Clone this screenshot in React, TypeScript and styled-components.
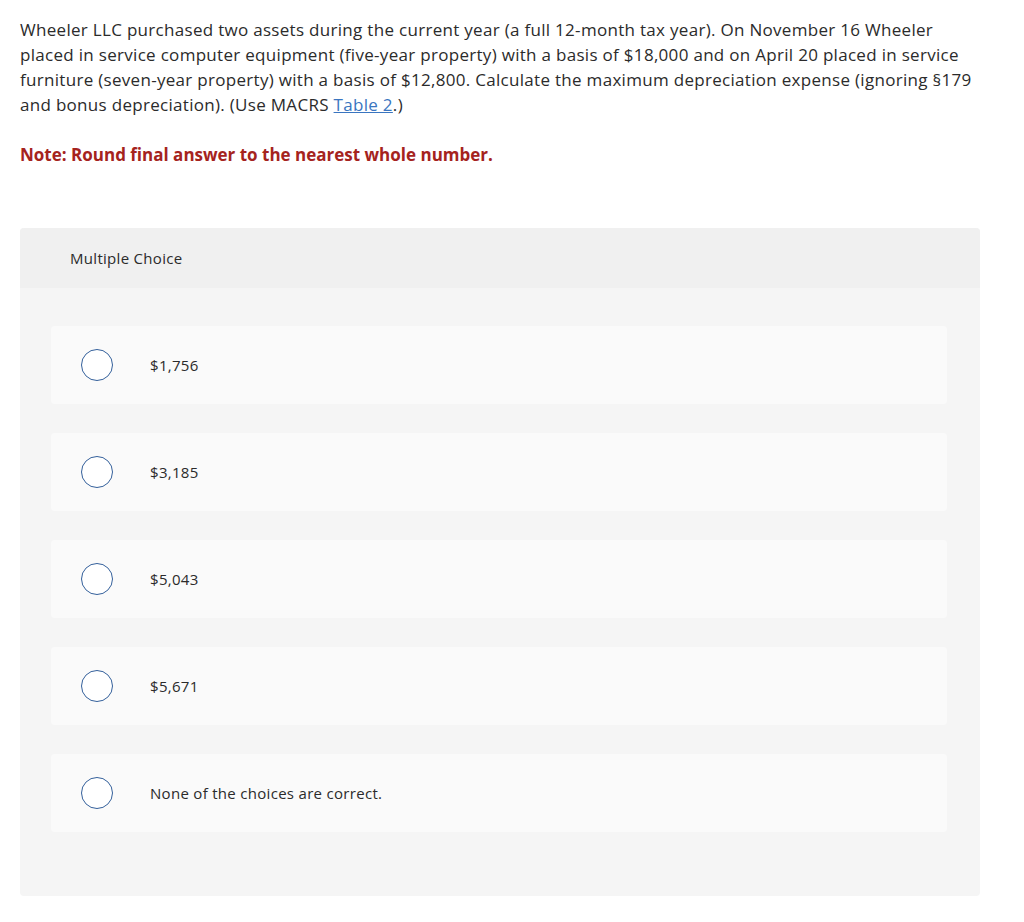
import styled, { createGlobalStyle } from 'styled-components';

const GlobalStyle = createGlobalStyle`
  body {
    margin: 0;
    background: #fff;
    font-family: "Open Sans", "Lato", sans-serif;
    color: #2b2b2b;
  }
`;

const Page = styled.div`
  padding: 17px 20px 0 20px;
`;

const Question = styled.p`
  margin: 0;
  font-size: 17px;
  line-height: 25px;
  letter-spacing: 0.3px;
  color: #2b2b2b;
  white-space: nowrap;
`;

const TableLink = styled.a`
  color: #3a75c0;
  text-decoration: underline;
`;

const Note = styled.p`
  margin: 25px 0 0;
  font-size: 17px;
  line-height: 25px;
  font-weight: 700;
  color: #a5231d;
`;

const Panel = styled.div`
  margin-top: 61px;
  width: 960px;
  background: #f5f5f5;
  border-radius: 4px;
  overflow: hidden;
`;

const PanelHeader = styled.div`
  height: 60px;
  display: flex;
  align-items: center;
  padding-left: 50px;
  background: #f0f0f0;
  font-size: 15px;
  letter-spacing: 0.3px;
  color: #2b2b2b;
`;

const Options = styled.div`
  display: flex;
  flex-direction: column;
  gap: 29px;
  padding: 38px 33px 64px 31px;
`;

const Option = styled.label`
  height: 78px;
  display: flex;
  align-items: center;
  gap: 37px;
  padding-left: 30px;
  background: #fafafa;
  border-radius: 4px;
  font-size: 15px;
  letter-spacing: 0.3px;
  color: #2b2b2b;
  cursor: pointer;
`;

const Radio = styled.span`
  width: 32px;
  height: 32px;
  box-sizing: border-box;
  border: 1.5px solid #34609b;
  border-radius: 50%;
  background: #fff;
  flex-shrink: 0;
`;

const choices = ['$1,756', '$3,185', '$5,043', '$5,671', 'None of the choices are correct.'];

export default function App() {
  return (
    <>
      <GlobalStyle />
      <Page>
        <Question>
          Wheeler LLC purchased two assets during the current year (a full 12-month tax year). On November 16 Wheeler
          <br />
          placed in service computer equipment (five-year property) with a basis of $18,000 and on April 20 placed in service
          <br />
          furniture (seven-year property) with a basis of $12,800. Calculate the maximum depreciation expense (ignoring §179
          <br />
          and bonus depreciation). (Use MACRS <TableLink href="#">Table 2</TableLink>.)
        </Question>
        <Note>Note: Round final answer to the nearest whole number.</Note>
        <Panel>
          <PanelHeader>Multiple Choice</PanelHeader>
          <Options>
            {choices.map((c) => (
              <Option key={c}>
                <Radio />
                {c}
              </Option>
            ))}
          </Options>
        </Panel>
      </Page>
    </>
  );
}
